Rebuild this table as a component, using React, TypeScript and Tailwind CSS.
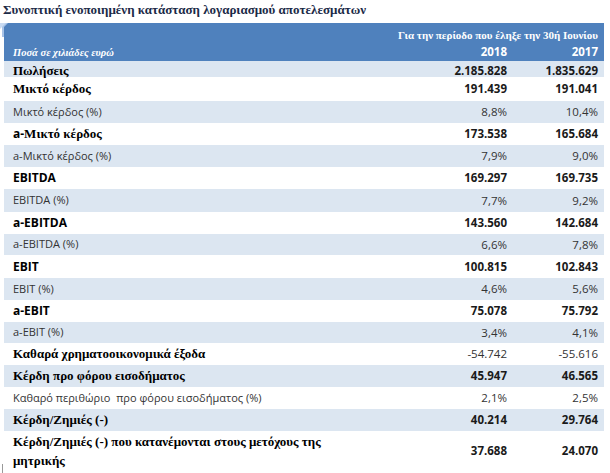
import type { ReactNode } from 'react';

const SERIF = "font-['Liberation_Serif','Times_New_Roman',serif]";
const SANS = "font-['Open_Sans','Noto_Sans',sans-serif]";

type Row = {
  label: ReactNode;
  a: string;
  b: string;
  kind: 'serif' | 'sansBold' | 'sans';
  numBold?: boolean;
  h: string;
};

const ROWS: Row[] = [
  { label: 'Πωλήσεις', a: '2.185.828', b: '1.835.629', kind: 'serif', numBold: true, h: 'h-[16px]' },
  { label: 'Μικτό κέρδος', a: '191.439', b: '191.041', kind: 'serif', numBold: true, h: 'h-[24px]' },
  { label: 'Μικτό κέρδος (%)', a: '8,8%', b: '10,4%', kind: 'sans', h: 'h-[22px]' },
  {
    label: (
      <>
        <span className={`${SANS} font-bold text-[12px]`}>a-</span>Μικτό κέρδος
      </>
    ),
    a: '173.538', b: '165.684', kind: 'serif', numBold: true, h: 'h-[22px]',
  },
  { label: 'a-Μικτό κέρδος (%)', a: '7,9%', b: '9,0%', kind: 'sans', h: 'h-[22px]' },
  { label: 'EBITDA', a: '169.297', b: '169.735', kind: 'sansBold', numBold: true, h: 'h-[22px]' },
  { label: 'EBITDA (%)', a: '7,7%', b: '9,2%', kind: 'sans', h: 'h-[23px]' },
  { label: 'a-EBITDA', a: '143.560', b: '142.684', kind: 'sansBold', numBold: true, h: 'h-[22px]' },
  { label: 'a-EBITDA (%)', a: '6,6%', b: '7,8%', kind: 'sans', h: 'h-[21px]' },
  { label: 'EBIT', a: '100.815', b: '102.843', kind: 'sansBold', numBold: true, h: 'h-[23px]' },
  { label: 'EBIT (%)', a: '4,6%', b: '5,6%', kind: 'sans', h: 'h-[22px]' },
  { label: 'a-EBIT', a: '75.078', b: '75.792', kind: 'sansBold', numBold: true, h: 'h-[22px]' },
  { label: 'a-EBIT (%)', a: '3,4%', b: '4,1%', kind: 'sans', h: 'h-[21px]' },
  { label: 'Καθαρά χρηματοοικονομικά έξοδα', a: '-54.742', b: '-55.616', kind: 'serif', h: 'h-[22px]' },
  { label: 'Κέρδη προ φόρου εισοδήματος', a: '45.947', b: '46.565', kind: 'serif', numBold: true, h: 'h-[22px]' },
  { label: 'Καθαρό περιθώριο  προ φόρου εισοδήματος (%)', a: '2,1%', b: '2,5%', kind: 'sans', h: 'h-[22px]' },
  { label: 'Κέρδη/Ζημιές (-)', a: '40.214', b: '29.764', kind: 'serif', numBold: true, h: 'h-[22px]' },
];

const labelCls = {
  serif: `${SERIF} font-bold text-[13px] text-black`,
  sansBold: `${SANS} font-bold text-[12px] text-black`,
  sans: `${SANS} text-[11px] text-[#333]`,
};

function Cells({ row }: { row: Row }) {
  const num = `${SANS} text-[11.5px] text-right pr-[6px] ${row.numBold ? 'font-bold text-[#1a1a1a]' : 'text-[#333]'}`;
  return (
    <>
      <div className={`pl-[9px] whitespace-pre ${labelCls[row.kind]}`}>{row.label}</div>
      <div className={num}>{row.a}</div>
      <div className={num}>{row.b}</div>
    </>
  );
}

export default function App() {
  return (
    <div className="w-[610px] h-[473px] bg-white overflow-hidden relative">
      <h1 className={`${SERIF} font-bold text-[13px] text-[#1b2a47] pl-[3px] h-[23px] leading-[20px]`}>
        Συνοπτική ενοποιημένη κατάσταση λογαριασμού αποτελεσμάτων
      </h1>

      <div className="ml-[4px] mr-[6px]">
        {/* header */}
        <div className="bg-[#4f81bd] h-[38px] text-white relative">
          <svg className="absolute -left-[4px] top-0" width="10" height="14" viewBox="0 0 10 14">
            <path d="M0 0 L8 0 L4 4 L4 14 L2 14 L2 4 Z" fill="#a9c4e8" />
            <path d="M0 0 L6 0 L0 6 Z" fill="#c9dbf2" />
          </svg>
          <div className={`${SERIF} font-bold text-[11px] text-right pr-[6px] pt-[4px] h-[19px] leading-[16px]`}>
            Για την περίοδο που έληξε την 30ή Ιουνίου
          </div>
          <div className="grid grid-cols-[1fr_92px_91px] items-center h-[19px]">
            <div className={`${SERIF} font-bold italic text-[10.5px] pl-[9px] pt-[3px]`}>Ποσά σε χιλιάδες ευρώ</div>
            <div className={`${SANS} font-bold text-[11.5px] text-right pr-[6px]`}>2018</div>
            <div className={`${SANS} font-bold text-[11.5px] text-right pr-[6px]`}>2017</div>
          </div>
        </div>

        {ROWS.map((r, i) => (
          <div
            key={i}
            className={`grid grid-cols-[1fr_92px_91px] items-center ${r.h} ${i % 2 === 0 ? 'bg-[#dce6f1]' : 'bg-white'}`}
          >
            <Cells row={r} />
          </div>
        ))}

        <div className="grid grid-cols-[1fr_92px_91px] items-center h-[40px] bg-white">
          <div className={`pl-[9px] pr-[8px] leading-[19px] ${labelCls.serif}`}>
            Κέρδη/Ζημιές (-) που κατανέμονται στους μετόχους της
            <br />
            μητρικής
          </div>
          <div className={`${SANS} font-bold text-[11.5px] text-right pr-[6px] text-[#1a1a1a]`}>37.688</div>
          <div className={`${SANS} font-bold text-[11.5px] text-right pr-[6px] text-[#1a1a1a]`}>24.070</div>
        </div>
      </div>
      <div className="absolute left-[2px] top-[464px] w-[1px] h-[9px] bg-[#999]" />
    </div>
  );
}
